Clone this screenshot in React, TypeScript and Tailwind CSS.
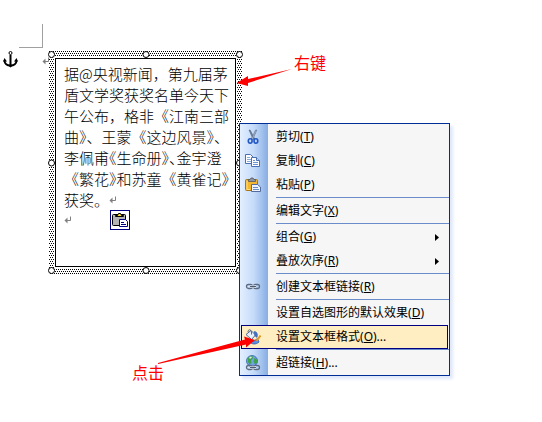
import { Fragment } from "react";
import type { ReactNode } from "react";

type Item = {
  label: string;
  hotkey: string;
  more?: boolean;
  icon?: ReactNode;
  submenu?: boolean;
  active?: boolean;
};

const uiFont = "font-['Noto_Sans','Noto_Sans_CJK_SC',sans-serif]";
const docFont = "font-['Noto_Sans_CJK_SC',sans-serif]";

// ── Icons ────────────────────────────────────────────────────────────────────
function IconAnchor() {
  return (
    <svg width="15" height="17" viewBox="0 0 15 17" fill="none" stroke="#000" aria-hidden="true">
      <circle cx="7.5" cy="2" r="1.5" />
      <path d="M7.5 4v11" strokeWidth="2" />
      <path d="M1.500 9.500c0 3 2.500 5 6 5s6-2 6-5" strokeWidth="2" />
      <path d="M0 10.500L1.500 7l2.500 3.500zM11 10.500L13.500 7l1.500 3.500zM4.500 14h6l-3 2.500z" fill="#000" stroke="none" />
    </svg>
  );
}

function IconReturn() {
  return (
    <svg width="8" height="8" viewBox="0 0 8 8" fill="none" stroke="#808080" aria-hidden="true">
      <path d="M6.500 0.500v4H1" />
      <path d="M3.500 1.500v6L0.500 4.500z" fill="#808080" stroke="none" />
    </svg>
  );
}

function IconCut() {
  return (
    <svg width="16" height="16" viewBox="0 0 16 16" fill="none" aria-hidden="true">
      <path d="M4 1l1.200 0L9.800 10l-1.600 0.600z" fill="#6d7f9c" stroke="#4b5c7a" strokeWidth="0.500" />
      <path d="M11.800 1l-1.200 0L6.200 10l1.600 0.600z" fill="#a9b7cc" stroke="#4b5c7a" strokeWidth="0.500" />
      <ellipse cx="5.200" cy="12" rx="1.900" ry="2.200" stroke="#2358c4" strokeWidth="1.600" />
      <ellipse cx="10.900" cy="12" rx="1.900" ry="2.200" stroke="#2358c4" strokeWidth="1.600" />
    </svg>
  );
}

function IconCopy() {
  return (
    <svg width="16" height="16" viewBox="0 0 16 16" fill="#fff" stroke="#4a6fb3" aria-hidden="true">
      <path d="M0.500 1.500h5l3 3v6h-8z" />
      <path d="M2 4.500h3M2 6.500h4M2 8.500h4" stroke="#86a9df" />
      <path d="M6.500 4.500h5l3 3v6h-8z" />
      <path d="M11.500 4.500v3h3" fill="#c9dbf5" />
      <path d="M8 7.500h2M8 9.500h5M8 11.500h5" stroke="#6b94d6" />
    </svg>
  );
}

function IconPaste() {
  return (
    <svg width="16" height="16" viewBox="0 0 16 16" aria-hidden="true">
      <rect x="0.500" y="2.500" width="12" height="11" rx="1" fill="#f2b632" stroke="#a8741a" />
      <path d="M2 4v8.500h3" stroke="#ffdf85" fill="none" />
      <path d="M3.500 4.500v-2h1.500L6 1h2l1 1.500h1.500v2z" fill="#8b96a8" stroke="#55575c" strokeWidth="0.800" />
      <path d="M6.500 7.500h6l3 2.500v4.500h-9z" fill="#eef4fd" stroke="#536c99" />
      <path d="M8 10.500h5M8 12.500h6" stroke="#6d8fc8" />
    </svg>
  );
}

function ChainLinks({ y }: { y: number }) {
  return (
    <g transform={`translate(0 ${y})`} fill="none">
      <rect x="1.500" y="0.500" width="6" height="4" rx="2" stroke="#5d6b82" strokeWidth="1.300" />
      <rect x="8.500" y="0.500" width="6" height="4" rx="2" stroke="#5d6b82" strokeWidth="1.300" />
      <path d="M5 2.500h6" stroke="#e6ebf2" strokeWidth="2.400" />
      <path d="M5 2.500h6" stroke="#4f5b70" strokeWidth="1.200" />
    </g>
  );
}

function IconLink() {
  return (
    <svg width="16" height="16" viewBox="0 0 16 16" aria-hidden="true">
      <ChainLinks y={5} />
    </svg>
  );
}

function IconFormat() {
  return (
    <svg width="16" height="16" viewBox="0 0 16 16" fill="none" aria-hidden="true">
      <path d="M1 5.500L6 1.500l4.500 4.500-4 4.500z" fill="#e8f0fc" stroke="#496aa6" />
      <path d="M3 3c0-3 3-3 3.500 0v2.500" stroke="#5d6b82" />
      <path d="M9 2.500c3 0 4 2.500 3 6L10 7z" fill="#3f74cf" stroke="#2a55a8" strokeWidth="0.500" />
      <path d="M4 12c2 3.500 7 4 10 1l-1.500-3.500L9 12z" fill="#5b8de0" stroke="#2a55a8" strokeWidth="0.800" />
      <path d="M15.500 6.500l-4 5.500" stroke="#e09a28" strokeWidth="2" />
    </svg>
  );
}

function IconWeb() {
  return (
    <svg width="16" height="16" viewBox="0 0 16 16" aria-hidden="true">
      <circle cx="7" cy="6" r="5.500" fill="#6fa3e6" stroke="#37649f" strokeWidth="0.800" />
      <path d="M3 3c2-2 4-2 5-1.500L7.500 4 6 5.500 6.500 8 4.500 9.500 3 7z" fill="#3fa24c" />
      <path d="M9.500 3l2.500 1.500v3L10 9.500 8.500 6.500z" fill="#3fa24c" />
      <path d="M4 2.500l2-1 1 1-2 1.500z" fill="#d8eedb" />
      <ChainLinks y={10} />
    </svg>
  );
}

function IconPasteOptions() {
  return (
    <svg width="18" height="18" viewBox="0 0 18 18" aria-hidden="true">
      <rect x="1.500" y="3.500" width="13" height="11" rx="1" fill="#b5b5b5" stroke="#000" />
      <path d="M4.500 5.500v-1h2l1-2h2l1 2h2v1z" fill="#ffe53b" stroke="#000" />
      <path d="M8.500 8.500h6l2 2v5h-8z" fill="#fff" stroke="#000080" />
      <path d="M10 11.500h3M10 13.500h5" stroke="#000080" />
    </svg>
  );
}

const groups: Item[][] = [
  [
    { label: "剪切", hotkey: "T", icon: <IconCut /> },
    { label: "复制", hotkey: "C", icon: <IconCopy /> },
    { label: "粘贴", hotkey: "P", icon: <IconPaste /> },
  ],
  [{ label: "编辑文字", hotkey: "X" }],
  [
    { label: "组合", hotkey: "G", submenu: true },
    { label: "叠放次序", hotkey: "R", submenu: true },
  ],
  [{ label: "创建文本框链接", hotkey: "R", icon: <IconLink /> }],
  [
    { label: "设置自选图形的默认效果", hotkey: "D" },
    { label: "设置文本框格式", hotkey: "O", more: true, icon: <IconFormat />, active: true },
  ],
  [{ label: "超链接", hotkey: "H", more: true, icon: <IconWeb /> }],
];

// half-width punctuation, for lines that would run past the frame
const half = "[font-feature-settings:'halt']";

// ── Text box ─────────────────────────────────────────────────────────────────
const handles = [
  "-left-px top-0",
  "left-1/2 top-0 -translate-x-1/2",
  "-right-px top-0",
  "-left-px top-1/2 -translate-y-1/2",
  "-right-px top-1/2 -translate-y-1/2",
  "-left-px bottom-0",
  "left-1/2 bottom-0 -translate-x-1/2",
  "-right-px bottom-0",
];

function DottedFrame() {
  return (
    <svg width="100%" height="100%" className="absolute inset-0" shapeRendering="crispEdges" aria-hidden="true">
      <pattern id="dots" width="2" height="4" patternUnits="userSpaceOnUse">
        <path d="M0 0h1v1H0zM1 2h1v1H1z" />
      </pattern>
      <rect width="100%" height="100%" fill="url(#dots)" />
    </svg>
  );
}

function TextBox() {
  return (
    <div className="relative px-1.5 py-[7px]">
      <DottedFrame />
      <div className={"relative w-[181px] border border-black bg-white pt-1 pb-9 pl-2 text-[15px] leading-[21px] font-light whitespace-nowrap text-black ring-1 ring-white " + docFont}>
        <p>据@央视新闻，第九届茅</p>
        <p>盾文学奖获奖名单今天下</p>
        <p>午公布，格非《江南三部</p>
        <p>曲》、王蒙《这边风景》、</p>
        <p className={half}>李佩甫《生命册》、金宇澄</p>
        <p>《繁花<span className={half}>》</span>和苏童《黄雀记》</p>
        <p className="flex items-center">获奖。<IconReturn /></p>
        <div className="flex h-5 items-center gap-[38px]">
          <IconReturn />
          <button aria-label="粘贴选项" className="h-5 w-5 border border-[#000080] bg-white">
            <IconPasteOptions />
          </button>
        </div>
      </div>
      {handles.map((h) => (
        <span key={h} className={"absolute h-[7px] w-[7px] rounded-full border border-black bg-white " + h} />
      ))}
    </div>
  );
}

// ── Context menu ─────────────────────────────────────────────────────────────
function MenuItem({ item }: { item: Item }) {
  return (
    <button
      role="menuitem"
      className={"mx-px flex h-6 w-[207px] items-center border text-left " +
        (item.active ? "border-[#000080] bg-[#ffeec2]" : "border-transparent")}
    >
      <span className="ml-[3px] w-[31px] flex-none">{item.icon}</span>
      <span className="flex-1 whitespace-nowrap">
        {item.label}(<u>{item.hotkey}</u>){item.more && "..."}
      </span>
      {item.submenu && (
        <svg width="4" height="7" viewBox="0 0 4 7" className="mr-2" aria-hidden="true">
          <path d="M0 0l4 3.500L0 7z" />
        </svg>
      )}
    </button>
  );
}

function ContextMenu() {
  return (
    <div
      role="menu"
      className={"absolute top-[123px] left-[239px] border border-[#002d96] bg-[linear-gradient(to_right,#e3efff,#c4dbf9_50%,#87ade4)] bg-[#f6f6f6] bg-[length:28px_100%] bg-no-repeat pt-px text-xs text-black shadow-[3px_3px_3px_#dfe7fa] " + uiFont}
    >
      {groups.map((group, i) => (
        <Fragment key={group[0].label}>
          {i > 0 && <hr className="mb-px ml-9 border-[#6a8ccb]" />}
          {group.map((item) => <MenuItem key={item.label} item={item} />)}
        </Fragment>
      ))}
    </div>
  );
}

// ── Red notes and arrows ─────────────────────────────────────────────────────
function Notes() {
  return (
    <>
      <svg width="300" height="370" className="pointer-events-none absolute top-0 left-0" fill="#f00" aria-hidden="true">
        <path d="M236.500 83l11.500-7v3L292 69 248 83v3z" />
        <path d="M255 340l-11-3.500 1 3L158 363l0 1L246 344.500v3z" />
      </svg>
      <span className={"absolute top-[50px] left-[294px] text-base text-[#f00] " + docFont}>右键</span>
      <span className={"absolute top-[360px] left-[132px] text-base text-[#f00] " + docFont}>点击</span>
    </>
  );
}

export default function App() {
  return (
    <main className="relative min-h-screen bg-white">
      <div className="pt-6 pl-[19px]">
        <div className="h-6 w-6 border-r border-b border-[#a0a0a0]" />
      </div>
      <div className="flex items-start pt-[3px] pl-[3px]">
        <IconAnchor />
        <div className="mt-1.5 ml-6 w-[7px]">
          <IconReturn />
        </div>
        <TextBox />
      </div>
      <ContextMenu />
      <Notes />
    </main>
  );
}
